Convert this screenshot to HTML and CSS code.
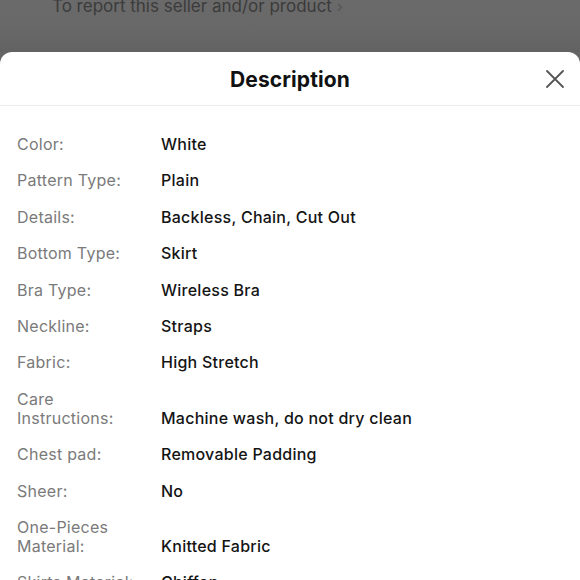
FILE: index.html
```html
<!DOCTYPE html>
<html>
<head>
<meta charset="utf-8">
<link rel="stylesheet" href="styles.css">
</head>
<body>
<div class="backdrop">
  <div class="report">To report this seller and/or product <span class="chev">›</span></div>
</div>
<div class="sheet">
  <div class="sheet-header">
    <h1 class="title">Description</h1>
    <button class="close" aria-label="Close">
      <svg width="18" height="18" viewBox="0 0 18 18"><path d="M1 1L17 17M17 1L1 17" stroke="#555" stroke-width="1.8" stroke-linecap="round" fill="none"/></svg>
    </button>
  </div>
  <dl class="specs">
    <dt>Color:</dt><dd>White</dd>
    <dt>Pattern Type:</dt><dd>Plain</dd>
    <dt>Details:</dt><dd>Backless, Chain, Cut Out</dd>
    <dt>Bottom Type:</dt><dd>Skirt</dd>
    <dt>Bra Type:</dt><dd>Wireless Bra</dd>
    <dt>Neckline:</dt><dd>Straps</dd>
    <dt>Fabric:</dt><dd>High Stretch</dd>
    <dt>Care Instructions:</dt><dd>Machine wash, do not dry clean</dd>
    <dt>Chest pad:</dt><dd>Removable Padding</dd>
    <dt>Sheer:</dt><dd>No</dd>
    <dt>One-Pieces Material:</dt><dd>Knitted Fabric</dd>
    <dt>Skirts Material:</dt><dd>Chiffon</dd>
  </dl>
</div>
</body>
</html>
```
FILE: styles.css
```css
html, body {
  margin: 0;
  padding: 0;
}
body {
  width: 580px;
  height: 580px;
  overflow: hidden;
  background: #656565;
  font-family: Inter, "Noto Sans", sans-serif;
}
.backdrop {
  height: 52px;
  background: linear-gradient(#6a6a6a 0, #686868 30px, #626262 52px);
  overflow: hidden;
}
.report {
  margin: -5px 0 0 52px;
  font-size: 17px;
  line-height: 22px;
  color: #3b3b3b;
}
.chev {
  color: #555;
  font-size: 16px;
}
.sheet {
  background: #fff;
  border-radius: 12px 12px 0 0;
  height: 600px;
}
.sheet-header {
  height: 53px;
  border-bottom: 1px solid #ececec;
  display: flex;
  align-items: center;
  justify-content: center;
  position: relative;
}
.title {
  margin: 0;
  font-size: 21px;
  font-weight: 700;
  color: #111;
  letter-spacing: 0.1px;
  padding-top: 1px;
}
.close {
  position: absolute;
  right: 16px;
  top: 18px;
  border: 0;
  background: none;
  padding: 0;
  width: 18px;
  height: 18px;
}
.specs {
  margin: 0;
  padding: 29px 0 0 17px;
  display: grid;
  grid-template-columns: 144px 1fr;
  row-gap: 17.4px;
  align-items: end;
  font-size: 16px;
  line-height: 19px;
  letter-spacing: 0.25px;
}
.specs dt {
  color: #7a7a7a;
  padding-right: 14px;
}
.specs dd {
  margin: 0;
  color: #141414;
  font-weight: 500;
}
```
